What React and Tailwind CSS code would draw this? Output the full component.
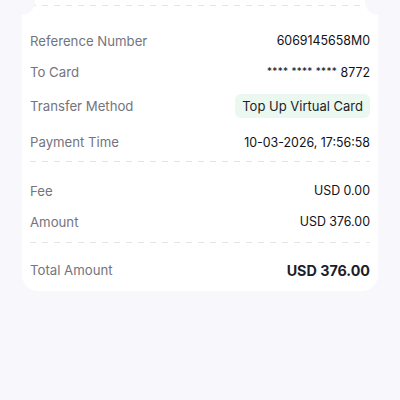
export default function App() {
  const font = { fontFamily: "Inter, 'Noto Sans', sans-serif" };

  return (
    <div className="h-[400px] w-[400px] overflow-hidden bg-[#f8f8fc]" style={font}>
      <div className="relative mx-[22px] rounded-b-2xl bg-white">
        {/* ticket notches */}
        <div className="absolute -left-[14px] -top-[12px] h-[27px] w-[27px] rounded-full bg-[#f8f8fc]" />
        <div className="absolute -right-[14px] -top-[12px] h-[27px] w-[27px] rounded-full bg-[#f8f8fc]" />

        <div className="h-[5px]" />
        <Dashed />

        <div className="px-2 pt-[20px]">
          <Row label="Reference Number" h="h-[31px]">
            6069145658M0
          </Row>
          <Row label="To Card" h="h-[32px]">
            <span className="text-[10px] tracking-[0.3px] align-[2px]">**** **** ****</span> 8772
          </Row>
          <Row label="Transfer Method" h="h-[36px]">
            <span className="rounded-md bg-[#eaf8f0] px-[7px] py-[4px] text-[13px] text-[#1d1d29]">
              Top Up Virtual Card
            </span>
          </Row>
          <Row label="Payment Time" h="h-[36px]">
            10-03-2026, 17:56:58
          </Row>
        </div>

        <Dashed />

        <div className="px-2 pt-[14px] pb-[4px]">
          <Row label="Fee" h="h-[31px]">
            USD 0.00
          </Row>
          <Row label="Amount" h="h-[31px]">
            USD 376.00
          </Row>
        </div>

        <Dashed />

        <div className="px-2 pt-[12px] pb-[5px]">
          <div className="flex h-[31px] items-center justify-between">
            <span className="text-[13.2px] text-[#74747e]">Total Amount</span>
            <span className="text-[14.3px] font-bold text-[#1d1d29]">USD 376.00</span>
          </div>
        </div>
      </div>
    </div>
  );
}

function Row({ label, h, children }) {
  return (
    <div className={`flex items-center justify-between ${h}`}>
      <span className="text-[13.2px] text-[#74747e]">{label}</span>
      <span className="text-[12.4px] text-[#111118]">{children}</span>
    </div>
  );
}

function Dashed() {
  return (
    <div className="mx-2 h-px bg-[repeating-linear-gradient(to_right,#e3e3e8_0_6px,transparent_6px_12px)]" />
  );
}
